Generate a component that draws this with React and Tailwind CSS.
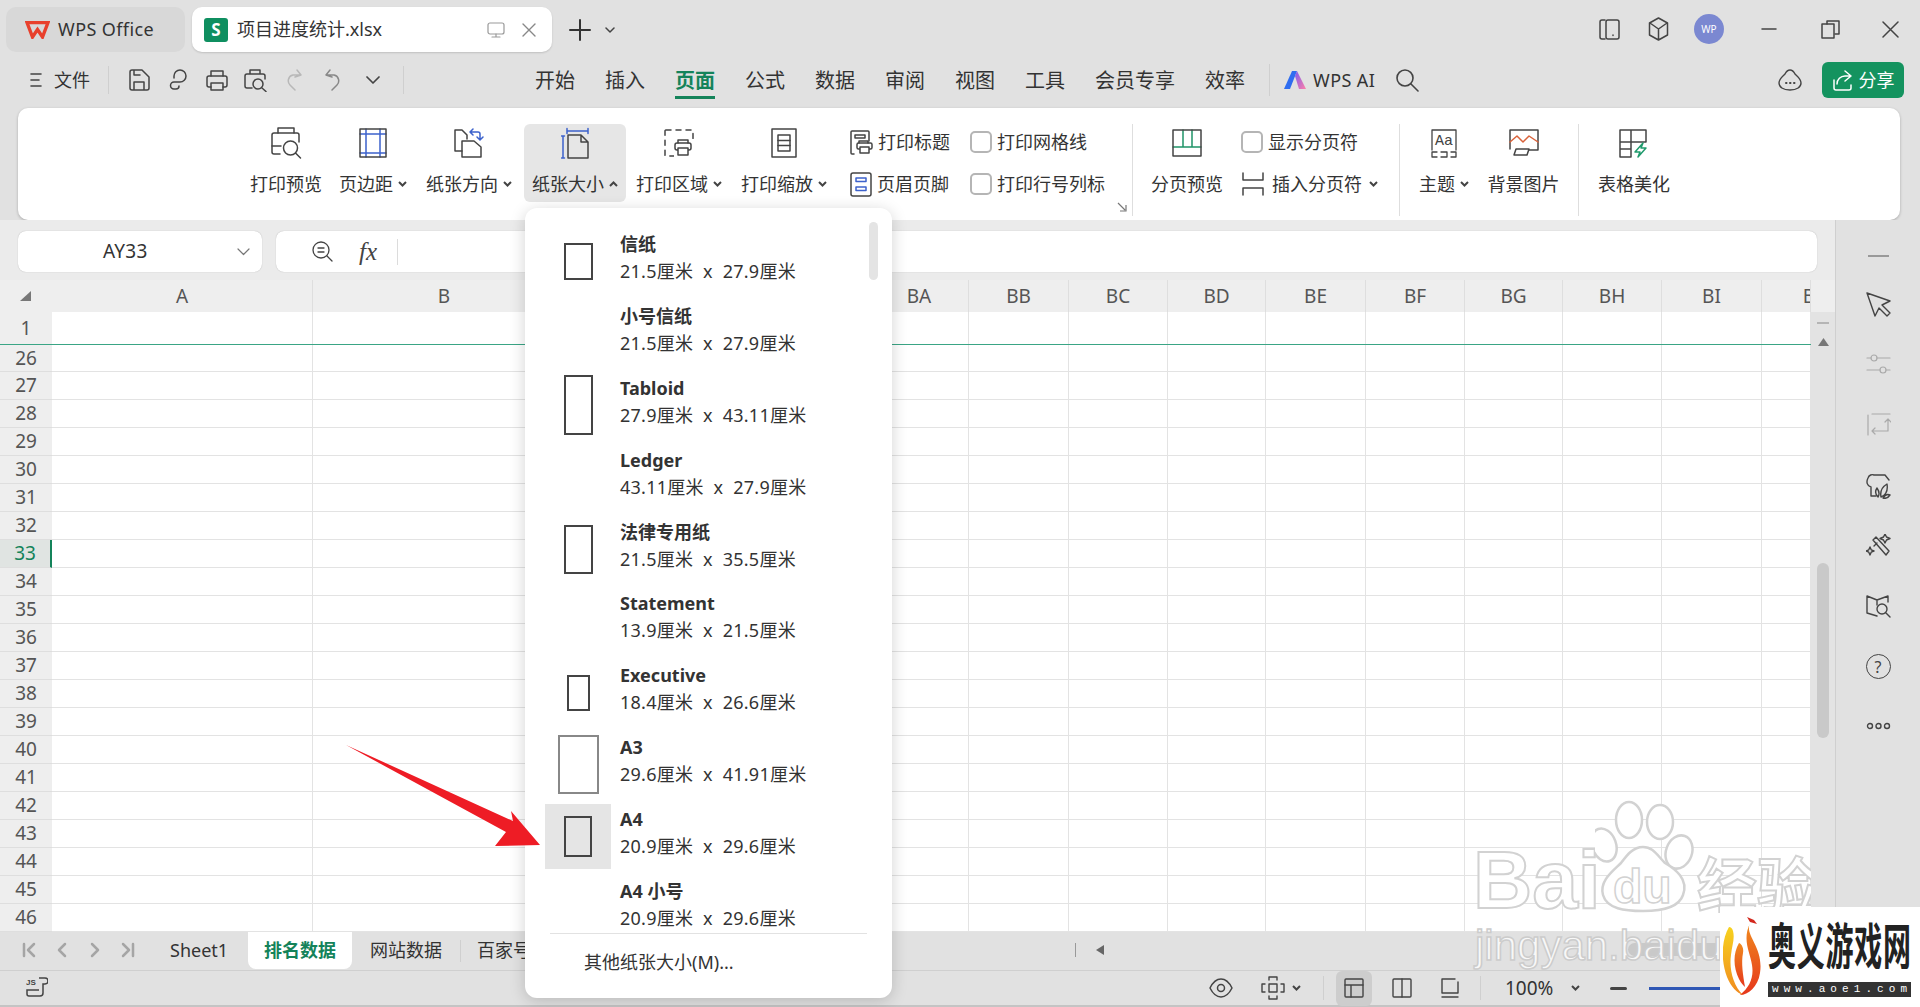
import React from "react";

const cols = [
  { label: "A", w: "w-[261px]" },
  { label: "B", w: "w-[263px]" },
  { label: "", w: "w-[294px]" },
  { label: "BA", w: "w-[99px]" },
  { label: "BB", w: "w-[100px]" },
  { label: "BC", w: "w-[99px]" },
  { label: "BD", w: "w-[98px]" },
  { label: "BE", w: "w-[100px]" },
  { label: "BF", w: "w-[99px]" },
  { label: "BG", w: "w-[98px]" },
  { label: "BH", w: "w-[99px]" },
  { label: "BI", w: "w-[100px]" },
  { label: "BJ", w: "w-[49px]" },
];

const rows = Array.from({ length: 21 }, (_, i) => i + 26);

const papers = [
  { name: "信纸", size: "21.5厘米  x  27.9厘米", icon: "w-[29px] h-[37px] border-[#444]" },
  { name: "小号信纸", size: "21.5厘米  x  27.9厘米" },
  { name: "Tabloid", size: "27.9厘米  x  43.11厘米", icon: "w-[29px] h-[60px] border-[#444]" },
  { name: "Ledger", size: "43.11厘米  x  27.9厘米" },
  { name: "法律专用纸", size: "21.5厘米  x  35.5厘米", icon: "w-[29px] h-[49px] border-[#444]" },
  { name: "Statement", size: "13.9厘米  x  21.5厘米" },
  { name: "Executive", size: "18.4厘米  x  26.6厘米", icon: "w-[23px] h-[36px] border-[#444]" },
  { name: "A3", size: "29.6厘米  x  41.91厘米", icon: "w-[41px] h-[59px] border-[#888]" },
  { name: "A4", size: "20.9厘米  x  29.6厘米", icon: "w-[28px] h-[41px] border-[#444]", active: true },
  { name: "A4 小号", size: "20.9厘米  x  29.6厘米" },
];

const Svg = ({ w = 24, h = 24, sw = 1.5, className = "text-[#444]", children }) => (
  <svg width={w} height={h} viewBox={`0 0 ${w} ${h}`} fill="none" stroke="currentColor" strokeWidth={sw} strokeLinecap="round" strokeLinejoin="round" className={className}>
    {children}
  </svg>
);

const Chevron = ({ up, className = "" }) => (
  <svg width="9" height="6" viewBox="0 0 9 6" fill="none" stroke="#444" strokeWidth="2" className={className}>
    <path d={up ? "M1 5l3.500-3.500L8 5" : "M1 1l3.500 3.500L8 1"} />
  </svg>
);

const BLUE = "#3d62cc";

const PrintPreviewIcon = () => (
  <Svg w={34} h={34}>
    <path d="M9 7V2h16v5" />
    <path d="M11 28H5a2 2 0 0 1-2-2V9a2 2 0 0 1 2-2h23a2 2 0 0 1 2 2v7" />
    <path d="M3 20h9" />
    <circle cx="21.500" cy="22" r="7" />
    <path d="M26.500 27l5 5" />
  </Svg>
);
const MarginIcon = () => (
  <Svg w={28} h={30}>
    <path d="M7 1v28M21 1v28M1 6h26M1 25h26" stroke={BLUE} />
    <rect x="1" y="1" width="26" height="28" />
  </Svg>
);
const OrientIcon = () => (
  <Svg w={32} h={30}>
    <path d="M9 23H2V2h7l5 5v4" />
    <path d="M9 29V13h12l7 6v10z" />
    <path d="M18 4h7a2 2 0 0 1 2 2v5M20 1l-3 3 3 3M24 9l3 3 3-3" stroke={BLUE} />
  </Svg>
);
const PaperIcon = () => (
  <Svg w={28} h={32}>
    <path d="M6 4h21M6 1.500v5M27 1.500v5M2 9v22M0.500 9h3M0.500 31h3" stroke={BLUE} />
    <path d="M7 8h13l7 7v16H7zM20 8v7h7" />
  </Svg>
);
const AreaIcon = () => (
  <Svg w={30} h={30}>
    <rect x="1" y="2" width="28" height="26" rx="1" strokeDasharray="5 5" />
    <rect x="10" y="11" width="20" height="19" fill="#fff" stroke="none" />
    <path d="M14 15v-3h10v3" />
    <rect x="11" y="15" width="16" height="7" rx="2" />
    <rect x="14" y="20" width="10" height="7" fill="#fff" />
  </Svg>
);
const ScaleIcon = () => (
  <Svg w={26} h={30}>
    <rect x="1" y="1" width="24" height="28" />
    <rect x="7" y="7" width="12" height="16" />
    <path d="M7 12.500h12M7 17.500h12" />
  </Svg>
);
const TitleIcon = () => (
  <Svg w={23} h={25}>
    <path d="M4 24H2a1 1 0 0 1-1-1V2a1 1 0 0 1 1-1h16a1 1 0 0 1 1 1v9" />
    <rect x="5" y="5" width="10" height="3" />
    <path d="M9 13v-2h9v2" />
    <rect x="7" y="13" width="15" height="6" rx="1.500" />
    <rect x="10" y="17" width="9" height="6" fill="#fff" />
  </Svg>
);
const HeaderIcon = () => (
  <Svg w={22} h={25}>
    <rect x="1" y="1" width="20" height="23" rx="2" />
    <rect x="6" y="6" width="10" height="3.500" stroke={BLUE} />
    <rect x="6" y="15" width="10" height="3.500" stroke={BLUE} />
  </Svg>
);
const BreakViewIcon = () => (
  <Svg w={30} h={28}>
    <path d="M1 18h28M11 1v17M20 1v17" stroke="#1f9468" />
    <path d="M1 1h28M1 1v26h28V1" />
  </Svg>
);
const InsertBreakIcon = () => (
  <Svg w={24} h={24}>
    <path d="M2 1v7h20V1M2 23v-7h20v7" />
  </Svg>
);
const ThemeIcon = () => (
  <Svg w={28} h={31} sw={1.3}>
    <path d="M2 22V2h24v20" />
    <text x="14" y="17" fontSize="15" textAnchor="middle" fill="#444" stroke="none" fontFamily="'Liberation Mono',monospace">Aa</text>
    <path d="M7 24H2v5h5M11 24h6v5h-6M21 24h5v5h-5" />
  </Svg>
);
const BgIcon = () => (
  <Svg w={30} h={28}>
    <path d="M1 20V1h28v20h-9" />
    <path d="M1 13l7-6 6 6 6-6 9 6" stroke="#d9623a" />
    <path d="M7 20h13l-2 6H5z" />
  </Svg>
);
const BeautyIcon = () => (
  <Svg w={30} h={29}>
    <path d="M1 1h26v12H1zM1 13v15h11V13M1 20h11M12 1v12" />
    <path d="M24 14l-8 9h5l-2 5 8-9h-5z" stroke="#1f9a6c" />
  </Svg>
);

const BigButton = ({ icon, label, w, ml = "", chevron, up, active }) => (
  <div className={`flex h-[78px] flex-col items-center rounded-md ${w} ${ml} ${active ? "bg-[#e6e6e6]" : ""}`}>
    <div className="flex h-[38px] items-center">{icon}</div>
    <div className="mt-[9px] flex h-[26px] items-center gap-[5px] whitespace-nowrap text-[18px] leading-[26px] text-[#333]">
      {label}
      {chevron && <Chevron up={up} />}
    </div>
  </div>
);

const SmallRow = ({ icon, label, chevron }) => (
  <div className="flex h-[26px] items-center whitespace-nowrap text-[18px] text-[#333]">
    {icon}
    <span>{label}</span>
    {chevron && <Chevron className="ml-[7px]" />}
  </div>
);

const CheckBox = () => <span className="mr-[5px] block h-[22px] w-[22px] rounded-[5px] border-2 border-[#b5b5b5] bg-white" />;

const Ribbon = () => (
  <div className="mx-[18px] flex h-[112px] w-[1882px] rounded-[10px] bg-white pl-[226px] pt-[16px] shadow-[0_1px_3px_rgba(0,0,0,0.25)]">
    <BigButton icon={<PrintPreviewIcon />} label="打印预览" w="w-[84px]" />
    <BigButton icon={<MarginIcon />} label="页边距" w="w-[82px]" ml="ml-[4px]" chevron />
    <BigButton icon={<OrientIcon />} label="纸张方向" w="w-[94px]" ml="ml-[8px]" chevron />
    <BigButton icon={<PaperIcon />} label="纸张大小" w="w-[102px]" ml="ml-[8px]" chevron up active />
    <BigButton icon={<AreaIcon />} label="打印区域" w="w-[98px]" ml="ml-[4px]" chevron />
    <BigButton icon={<ScaleIcon />} label="打印缩放" w="w-[100px]" ml="ml-[6px]" chevron />
    <div className="ml-[14px] flex w-[122px] flex-col gap-[16px] pt-[5px]">
      <SmallRow icon={<span className="mr-[5px] ml-[2px] block"><TitleIcon /></span>} label="打印标题" />
      <SmallRow icon={<span className="mr-[5px] ml-[2px] block"><HeaderIcon /></span>} label="页眉页脚" />
    </div>
    <div className="relative h-[90px] w-[162px] pt-[5px]">
      <div className="flex flex-col gap-[16px]">
        <SmallRow icon={<CheckBox />} label="打印网格线" />
        <SmallRow icon={<CheckBox />} label="打印行号列标" />
      </div>
      <svg width="10" height="10" viewBox="0 0 10 10" fill="none" stroke="#777" strokeWidth="1.2" className="absolute bottom-[2px] right-[5px]">
        <path d="M1 1l7 7M3 9h6V3" />
      </svg>
    </div>
    <div className="h-[92px] w-px bg-[#dedede]" />
    <BigButton icon={<BreakViewIcon />} label="分页预览" w="w-[82px]" ml="ml-[13px]" />
    <div className="ml-[13px] flex w-[158px] flex-col gap-[16px] pt-[5px]">
      <SmallRow icon={<CheckBox />} label="显示分页符" />
      <SmallRow icon={<span className="mr-[7px] block"><InsertBreakIcon /></span>} label="插入分页符" chevron />
    </div>
    <div className="h-[92px] w-px bg-[#dedede]" />
    <BigButton icon={<ThemeIcon />} label="主题" w="w-[64px]" ml="ml-[12px]" chevron />
    <BigButton icon={<BgIcon />} label="背景图片" w="w-[81px]" ml="ml-[7px]" />
    <div className="ml-[14px] h-[92px] w-px bg-[#dedede]" />
    <BigButton icon={<BeautyIcon />} label="表格美化" w="w-[80px]" ml="ml-[15px]" />
  </div>
);

const TitleBar = () => (
  <div className="flex h-[52px] items-start pl-[6px] pt-[7px]">
    <div className="flex h-[45px] w-[179px] items-center rounded-[10px] bg-[#d8d8d8] pl-[19px] text-[18px] tracking-[0.4px] text-[#333]">
      <svg width="25" height="18" viewBox="0 0 25 18" fill="none" stroke="#e8402c" strokeWidth="3.400" strokeLinejoin="miter" className="mr-[8px]">
        <path d="M2 1.500h21L17.500 16 12.500 8.500 7.500 16z" />
      </svg>
      WPS Office
    </div>
    <div className="ml-[7px] flex h-[45px] w-[360px] items-center rounded-[10px] bg-white pl-[12px] text-[18px] text-[#333] shadow-[0_1px_2px_rgba(0,0,0,0.15)]">
      <div className="flex h-[24px] w-[24px] items-center justify-center rounded-[3px] bg-[#0f8f60] text-[17px] font-bold text-white">S</div>
      <span className="ml-[9px]">项目进度统计.xlsx</span>
      <Svg w={18} h={18} sw={1.2} className="ml-[105px] text-[#999]">
        <rect x="1" y="2" width="16" height="11" rx="2" />
        <path d="M9 13v3M5 16h8" />
      </Svg>
      <Svg w={16} h={16} sw={1.4} className="ml-[16px] text-[#888]">
        <path d="M2 2l12 12M14 2L2 14" />
      </Svg>
    </div>
    <Svg w={22} h={22} sw={2} className="ml-[17px] mt-[12px] text-[#333]">
      <path d="M11 1v20M1 11h20" />
    </Svg>
    <Svg w={10} h={7} sw={1.5} className="ml-[14px] mt-[20px] text-[#444]">
      <path d="M1 1l4 4 4-4" />
    </Svg>
    <div className="ml-auto flex items-center pr-[10px] pt-[6px]">
      <div className="flex h-[32px] w-[40px] items-center justify-center">
        <Svg w={22} h={21}>
          <path d="M6 1H3a2 2 0 0 0-2 2v15a2 2 0 0 0 2 2h3" />
          <rect x="7" y="1" width="13" height="19" rx="2" />
          <path d="M14 16v.5" />
        </Svg>
      </div>
      <div className="ml-[8px] flex h-[32px] w-[40px] items-center justify-center">
        <Svg w={23} h={24}>
          <path d="M11.500 1l9 5v12l-9 5-9-5V6zM3 6l8.500 6 8.500-6M11.500 12v11" />
        </Svg>
      </div>
      <div className="ml-[11px] flex h-[32px] w-[40px] items-center justify-center">
        <div className="flex h-[30px] w-[30px] items-center justify-center rounded-full bg-[#7b88d1] text-[10px] text-white">WP</div>
      </div>
      <div className="ml-[20px] flex h-[32px] w-[40px] items-center justify-center">
        <Svg w={16} h={4}><path d="M1 2h14" /></Svg>
      </div>
      <div className="ml-[21px] flex h-[32px] w-[40px] items-center justify-center">
        <Svg w={19} h={19}>
          <path d="M6 4V1h12v13h-4" />
          <rect x="1" y="4" width="12" height="14" />
        </Svg>
      </div>
      <div className="ml-[20px] flex h-[32px] w-[40px] items-center justify-center">
        <Svg w={17} h={17}><path d="M1 1l15 15M16 1L1 16" /></Svg>
      </div>
    </div>
  </div>
);

const QuickIcon = ({ children }) => <div className="flex w-[39px] items-center justify-center">{children}</div>;

const MenuBar = () => (
  <div className="flex h-[56px] items-center pl-[30px] text-[18px] text-[#333]">
    <Svg w={12} h={16} sw={1.6}><path d="M1 2h10M1 8h8M1 14h10" /></Svg>
    <span className="ml-[12px] w-[36px] whitespace-nowrap">文件</span>
    <div className="ml-[18px] h-[28px] w-px bg-[#cfcfcf]" />
    <div className="ml-[10px] flex">
      <QuickIcon>
        <Svg w={22} h={22}>
          <path d="M4 1h10l7 7v11a2 2 0 0 1-2 2H4a2 2 0 0 1-2-2V3a2 2 0 0 1 2-2zM6 1v5h6M6 21v-8h10v8" />
        </Svg>
      </QuickIcon>
      <QuickIcon>
        <Svg w={20} h={22}><path d="M6 9V7a6 6 0 1 1 6 6H6a3.500 3.500 0 0 0 0 7h2a3 3 0 0 0 3-3" /></Svg>
      </QuickIcon>
      <QuickIcon>
        <Svg w={22} h={21}>
          <path d="M5 6V1h12v5" />
          <path d="M5 17H3a2 2 0 0 1-2-2V8a2 2 0 0 1 2-2h16a2 2 0 0 1 2 2v7a2 2 0 0 1-2 2h-2" />
          <rect x="5" y="13" width="12" height="7" />
        </Svg>
      </QuickIcon>
      <QuickIcon>
        <Svg w={23} h={23}>
          <path d="M6 5V1h10v4M8 19H3a2 2 0 0 1-2-2V7a2 2 0 0 1 2-2h16a2 2 0 0 1 2 2v3" />
          <circle cx="14" cy="15" r="5" />
          <path d="M18 19l4 3.500" />
        </Svg>
      </QuickIcon>
      <QuickIcon>
        <Svg w={18} h={22} className="text-[#b8b8b8]"><path d="M11 1l4 5-6 2M15 6H7C2 7 1 13 4 16l5 5" /></Svg>
      </QuickIcon>
      <QuickIcon>
        <Svg w={18} h={22} className="mr-[4px] text-[#888]"><path d="M7 1L3 6l6 2M3 6h8c5 1 6 7 3 10l-5 5" /></Svg>
      </QuickIcon>
      <QuickIcon>
        <Svg w={14} h={9} sw={1.7}><path d="M1 1l6 6 6-6" /></Svg>
      </QuickIcon>
    </div>
    <div className="ml-[11px] h-[28px] w-px bg-[#cfcfcf]" />
    <div className="ml-[131px] mt-[1px] flex gap-[30px] text-[20px] text-[#333]">
      <span>开始</span>
      <span>插入</span>
      <span className="relative font-bold text-[#14835a]">
        页面
        <span className="absolute -bottom-[3px] left-0 h-[3px] w-full bg-[#14835a]" />
      </span>
      <span>公式</span>
      <span>数据</span>
      <span>审阅</span>
      <span>视图</span>
      <span>工具</span>
      <span className="whitespace-nowrap">会员专享</span>
      <span>效率</span>
    </div>
    <div className="ml-[24px] h-[32px] w-px bg-[#cfcfcf]" />
    <svg width="24" height="18" viewBox="0 0 24 18" className="ml-[14px]">
      <defs>
        <linearGradient id="aiPink" x1="0" y1="0" x2="1" y2="1">
          <stop offset="0" stopColor="#7b5cf0" />
          <stop offset="1" stopColor="#ff7fa8" />
        </linearGradient>
      </defs>
      <path d="M8 0h5L6 18H0z" fill="#2f6df0" />
      <path d="M11 5l2-5 9 18h-7z" fill="url(#aiPink)" />
    </svg>
    <span className="ml-[5px] w-[61px] whitespace-nowrap tracking-[0.4px]">WPS AI</span>
    <Svg w={24} h={24} sw={1.6} className="ml-[21px] text-[#444]">
      <circle cx="10" cy="10" r="8" />
      <path d="M16 16l7 7" />
    </Svg>
    <div className="ml-auto">
      <Svg w={24} h={24} sw={1.4}>
        <path d="M12 2c3 0 4 2 5 4 2 2 6 5 6 9 0 4-4 7-11 7S1 19 1 15c0-4 4-7 6-9 1-2 2-4 5-4z" />
        <path d="M8 15h.5M12 15h.5M16 15h.5" strokeWidth="2" />
      </Svg>
    </div>
    <div className="ml-[20px] mr-[16px] flex h-[36px] w-[82px] items-center justify-center gap-[5px] rounded-md bg-[#14935f] text-[18px] text-white">
      <Svg w={22} h={22} sw={1.5} className="text-white">
        <path d="M13 2l6 5-6 5M19 7h-6a8 8 0 0 0-8 8M2 11v8a2 2 0 0 0 2 2h13a2 2 0 0 0 2-2v-3" />
      </Svg>
      分享
    </div>
  </div>
);

const FormulaRow = () => (
  <div className="flex h-[60px] items-center bg-[#ebebeb] pl-[18px] pt-[3px]">
    <div className="flex h-[41px] w-[244px] items-center rounded-lg bg-white pl-[85px] text-[19px] tracking-[0.3px] text-[#333] shadow-[0_0_1px_rgba(0,0,0,0.3)]">
      <span className="w-[52px]">AY33</span>
      <Svg w={13} h={8} sw={1.2} className="ml-[82px] text-[#777]"><path d="M1 1l5.500 5.500L12 1" /></Svg>
    </div>
    <div className="ml-[14px] flex h-[41px] w-[1541px] items-center rounded-lg bg-white pl-[36px] shadow-[0_0_1px_rgba(0,0,0,0.3)]">
      <Svg w={22} h={22} sw={1.3}>
        <circle cx="9" cy="9" r="8" />
        <path d="M15 15l5 5M6 7h6M6 11h6" />
      </Svg>
      <span className="ml-[25px] font-['Liberation_Serif',serif] text-[25px] italic text-[#444]">fx</span>
      <div className="ml-[20px] h-[26px] w-px bg-[#dcdcdc]" />
    </div>
  </div>
);

const Grid = () => (
  <div className="flex">
    <div className="w-[1811px] overflow-hidden bg-white">
      <div className="flex h-[32px] bg-[#eeeeee] text-[19px] text-[#555]">
        <div className="flex w-[52px] items-center justify-center">
          <svg width="12" height="10" viewBox="0 0 12 10"><path d="M11 0v10H0z" fill="#777" /></svg>
        </div>
        {cols.map((c) => (
          <div key={c.label} className={`flex shrink-0 justify-start overflow-hidden border-r border-[#dedede] ${c.w}`}>
            <span className={`block shrink-0 text-center leading-[32px] ${c.label === "BJ" ? "w-[99px]" : "w-full"}`}>{c.label}</span>
          </div>
        ))}
      </div>
      <div className="flex h-[33px] border-b border-[#3aa585]">
        <div className="flex w-[52px] items-center justify-center bg-[#eeeeee] text-[19px] text-[#555]">1</div>
        {cols.map((c) => (
          <div key={c.label} className={`shrink-0 border-r border-[#e3e3e3] ${c.w}`} />
        ))}
      </div>
      {rows.map((n) => (
        <div key={n} className={`flex ${n === 26 ? "h-[27px]" : "h-[28px]"}`}>
          <div className={`flex w-[52px] items-center justify-center border-b border-[#dedede] text-[19px] ${n === 33 ? "border-r-2 border-r-[#14835a] bg-[#e0e4e2] text-[#14835a]" : "bg-[#eeeeee] text-[#555]"}`}>
            {n}
          </div>
          {cols.map((c) => (
            <div key={c.label} className={`shrink-0 border-r border-b border-[#e3e3e3] ${c.w}`} />
          ))}
        </div>
      ))}
    </div>
    <div className="w-[24px] bg-[#e3e3e3]">
      <div className="h-[32px] bg-[#eeeeee]" />
      <div className="flex flex-col items-center pt-[10px]">
        <div className="h-[2px] w-[12px] bg-[#b5b5b5]" />
        <svg width="11" height="8" viewBox="0 0 11 8" className="mt-[14px]"><path d="M5.500 0L11 8H0z" fill="#777" /></svg>
        <div className="mt-[217px] h-[175px] w-[12px] rounded-full bg-[#c9c9c9]" />
      </div>
    </div>
  </div>
);

const SheetTabs = () => (
  <div className="flex h-[38px] items-start bg-[#e1e1e1] pl-[22px] text-[18px] text-[#333]">
    <div className="flex h-[36px] items-center">
      <Svg w={14} h={16} sw={2.5} className="text-[#a5a5a5]"><path d="M2 2v12M12 2L6 8l6 6" /></Svg>
      <Svg w={10} h={16} sw={2.5} className="ml-[21px] text-[#a5a5a5]"><path d="M8 2L2 8l6 6" /></Svg>
      <Svg w={10} h={16} sw={2.5} className="ml-[23px] text-[#a5a5a5]"><path d="M2 2l6 6-6 6" /></Svg>
      <Svg w={14} h={16} sw={2.5} className="ml-[21px] text-[#a5a5a5]"><path d="M2 2l6 6-6 6M12 2v12" /></Svg>
    </div>
    <span className="ml-[35px] leading-[36px]">Sheet1</span>
    <div className="ml-[20px] flex h-[37px] w-[104px] items-center justify-center rounded-b-lg bg-white font-bold text-[#14835a]">排名数据</div>
    <span className="ml-[18px] leading-[36px]">网站数据</span>
    <div className="ml-[18px] mt-[8px] h-[22px] w-px bg-[#cfcfcf]" />
    <span className="ml-[16px] w-[200px] whitespace-nowrap leading-[36px]">百家号数据</span>
    <div className="ml-[398px] mt-[11px] h-[14px] w-px bg-[#999]" />
    <svg width="8" height="10" viewBox="0 0 8 10" className="ml-[20px] mt-[13px]"><path d="M8 0v10L0 5z" fill="#666" /></svg>
    <div className="ml-[524px] mt-[11px] h-[13px] w-[180px] rounded-full bg-[#c9c9c9]" />
  </div>
);

const SideIcon = ({ children, mt }) => <div className={`flex justify-center ${mt}`}>{children}</div>;

const SidePanel = () => (
  <div className="w-[85px] border-l border-[#cfcfcf] bg-[#e1e1e1]">
    <SideIcon mt="mt-[35px]"><div className="h-[2px] w-[21px] bg-[#999]" /></SideIcon>
    <SideIcon mt="mt-[35px]">
      <Svg w={25} h={25} sw={1.4}><path d="M1 1l23 8-8 4 8 8-3 3-8-8-4 8z" /></Svg>
    </SideIcon>
    <SideIcon mt="mt-[35px]">
      <Svg w={25} h={24} sw={1.2} className="text-[#aaa]">
        <path d="M1 6h4M11 6h13M1 18h13M20 18h4" />
        <circle cx="8" cy="6" r="3" />
        <circle cx="17" cy="18" r="3" />
      </Svg>
    </SideIcon>
    <SideIcon mt="mt-[37px]">
      <Svg w={25} h={24} sw={1.2} className="text-[#aaa]">
        <path d="M6 1h18M2 2v20M22 7v11H7M9 15l-3 3 3 3M19 9l3-3 3 3" />
      </Svg>
    </SideIcon>
    <SideIcon mt="mt-[36px]">
      <Svg w={25} h={26} sw={1.4}>
        <path d="M5 23V14C1 13 0 9 2 5c1-3 4-4 6-3h11l4 5M5 23h5" />
        <path d="M12 24c-3-3-3-6-1-9 2 3 3 6 1 9zM15 24c-1-5 1-10 6-13 1 6-1 11-6 13zM17 25c2-3 5-4 7-3-2 3-4 4-7 3z" />
      </Svg>
    </SideIcon>
    <SideIcon mt="mt-[35px]">
      <Svg w={25} h={25} sw={1.4}>
        <path d="M7 6l3-3 13 14-3 4zM11 9l-3 3" />
        <path d="M19 0l1.500 3L24 4.500 20.500 6 19 9l-1.500-3L14 4.500 17.500 3zM4 13l1.200 2.800L8 17l-2.800 1.200L4 21l-1.200-2.800L0 17l2.800-1.200z" />
      </Svg>
    </SideIcon>
    <SideIcon mt="mt-[35px]">
      <Svg w={25} h={25} sw={1.4}>
        <path d="M11 6L1 2v17l10 3M11 6l11-4v6M11 6v5" />
        <circle cx="16" cy="15" r="5" />
        <path d="M20 19l4 4" />
      </Svg>
    </SideIcon>
    <SideIcon mt="mt-[35px]">
      <div className="flex h-[25px] w-[25px] items-center justify-center rounded-full border-[1.5px] border-[#444] text-[16px] text-[#444]">?</div>
    </SideIcon>
    <SideIcon mt="mt-[43px]">
      <Svg w={25} h={8} sw={1.4}>
        <circle cx="4" cy="4" r="2.500" />
        <circle cx="12.500" cy="4" r="2.500" />
        <circle cx="21" cy="4" r="2.500" />
      </Svg>
    </SideIcon>
  </div>
);

const StatusBar = () => (
  <div className="flex h-[37px] items-center border-t border-b-2 border-t-[#cfcfcf] border-b-[#c4c4c4] bg-[#e1e1e1] pl-[26px]">
    <svg width="22" height="20" viewBox="0 0 22 20" fill="none" stroke="#444" strokeWidth="1.5" className="-mt-[2px]">
      <text x="0" y="8" fontSize="8" fontWeight="700" fill="#444" stroke="none" fontFamily="'Liberation Sans',sans-serif">JS</text>
      <path d="M13 1h6a2.500 2.500 0 0 1 0 6h-2v9a3 3 0 0 1-3 3H3a2 2 0 0 1-2-2v-4h12" />
    </svg>
    <Svg w={24} h={20} sw={1.5} className="ml-[1161px] text-[#444]">
      <path d="M1 10c6-12 16-12 22 0-6 12-16 12-22 0z" />
      <circle cx="12" cy="10" r="3.500" />
    </Svg>
    <Svg w={24} h={24} sw={1.4} className="ml-[28px] text-[#444]">
      <rect x="8" y="8" width="8" height="8" />
      <path d="M8 4V1h8v3M8 20v3h8v-3M4 8H1v8h3M20 8h3v8h-3" />
    </Svg>
    <Chevron className="ml-[7px]" />
    <div className="ml-[22px] h-[24px] w-px bg-[#cfcfcf]" />
    <div className="ml-[12px] flex h-[35px] w-[36px] items-center justify-center rounded-md bg-[#cdcdcd]">
      <Svg w={20} h={20} sw={1.4}>
        <rect x="1" y="1" width="18" height="18" rx="1" />
        <path d="M1 7h18M7 7v12" />
      </Svg>
    </div>
    <Svg w={20} h={20} sw={1.4} className="ml-[20px] text-[#444]">
      <rect x="1" y="1" width="18" height="18" rx="1" />
      <path d="M10 1v18" />
    </Svg>
    <Svg w={20} h={20} sw={1.4} className="ml-[28px] text-[#444]">
      <path d="M15 1H2v14h16V4M2 19h16" />
    </Svg>
    <div className="ml-[20px] h-[24px] w-px bg-[#cfcfcf]" />
    <span className="ml-[24px] text-[19px] text-[#333]">100%</span>
    <Chevron className="ml-[18px]" />
    <div className="ml-[30px] h-[3px] w-[17px] rounded-full bg-[#444]" />
    <div className="ml-[22px] h-[3px] w-[80px] bg-[#2f57b5]" />
  </div>
);

const PaperMenu = () => (
  <div className="absolute left-[525px] top-[208px] z-10 h-[790px] w-[367px] rounded-[12px] bg-white shadow-[0_3px_16px_rgba(0,0,0,0.18)]">
    <div className="absolute right-[14px] top-[14px] h-[58px] w-[9px] rounded-full bg-[#e4e4e4]" />
    <div className="h-[725px] overflow-hidden pl-[20px] pt-[15px]">
      {papers.map((p) => (
        <div key={p.name} className="flex h-[71.9px]">
          <div className={`mt-[6px] flex h-[65px] w-[66px] shrink-0 items-center justify-center ${p.active ? "bg-[#e5e5e5]" : ""}`}>
            {p.icon && <div className={`border-2 ${p.icon}`} />}
          </div>
          <div className="ml-[9px] whitespace-pre pt-[8px] text-[18px] leading-[27px] tracking-[0.25px] text-[#333]">
            <div className="font-bold tracking-normal">{p.name}</div>
            <div>{p.size}</div>
          </div>
        </div>
      ))}
    </div>
    <div className="mx-[25px] h-px bg-[#e2e2e2]" />
    <div className="pl-[59px] pt-[15px] text-[18px] leading-[27px] text-[#333]">其他纸张大小(M)...</div>
  </div>
);

const Watermark = () => (
  <div className="pointer-events-none absolute left-[1470px] top-[795px] z-20 h-[175px] w-[341px] overflow-hidden font-['Liberation_Sans',sans-serif] text-white">
    <div className="absolute left-[3px] top-[40px] text-[82px] font-bold leading-[90px] [-webkit-text-stroke:2px_#d2d2d2]">Bai</div>
    <svg width="100" height="120" viewBox="0 0 100 120" fill="#fff" stroke="#d2d2d2" strokeWidth="2.500" className="absolute left-[125px] top-[2px]">
      <ellipse cx="34" cy="23" rx="13" ry="18" />
      <ellipse cx="65" cy="25" rx="13" ry="17" />
      <ellipse cx="9" cy="48" rx="12" ry="17" transform="rotate(-20 9 48)" />
      <ellipse cx="84" cy="55" rx="13" ry="17" transform="rotate(20 84 55)" />
      <path d="M48 50c10 0 14 8 22 16 10 6 24 16 18 32-4 12-20 16-40 16-18 0-36-2-40-16-4-14 10-24 18-32 6-8 12-16 22-16z" />
    </svg>
    <div className="absolute left-[143px] top-[62px] text-[48px] font-bold leading-[60px] text-white [-webkit-text-stroke:1.5px_#d2d2d2]">du</div>
    <div className="absolute left-[227px] top-[52px] whitespace-nowrap font-['Noto_Sans_CJK_SC',sans-serif] text-[60px] font-bold leading-[70px] [-webkit-text-stroke:2px_#d2d2d2]">经验</div>
    <div className="absolute left-[5px] top-[126px] whitespace-nowrap text-[42px] leading-[50px] text-[#f8f8f8] [-webkit-text-stroke:1.5px_#cccccc]">jingyan.baidu</div>
  </div>
);

const SiteBadge = () => (
  <div className="absolute bottom-0 right-0 z-30 flex h-[100px] w-[200px] bg-white pl-[3px] pt-[10px]">
    <svg width="40" height="80" viewBox="0 0 40 80" className="shrink-0">
      <defs>
        <linearGradient id="flameA" x1="0" y1="0" x2="0" y2="1">
          <stop offset="0" stopColor="#f7d21f" />
          <stop offset="1" stopColor="#f08a1e" />
        </linearGradient>
        <linearGradient id="flameB" x1="0" y1="0" x2="0" y2="1">
          <stop offset="0" stopColor="#f08a1e" />
          <stop offset="1" stopColor="#e6371c" />
        </linearGradient>
      </defs>
      <path d="M24 0l7 3 3 4-7-2z" fill="#d3281d" />
      <path d="M27 6c-6 12 14 24 10 50-2 14-12 22-20 22 10-8 14-18 12-30-2-14-10-24-2-42z" fill="url(#flameB)" />
      <path d="M6 10C-2 24-2 44 4 60c4 10 10 16 16 18C10 68 6 52 8 38c1-10 4-16 2-24-1-3-2-4-4-4z" fill="url(#flameA)" />
      <path d="M16 26c-6 10-6 24 0 36 2 4 4 6 6 8-2-12-4-24-2-34 1-4-1-9-4-10z" fill="url(#flameB)" />
    </svg>
    <div className="ml-[5px] flex flex-col">
      <div className="flex h-[52px] w-[143px] items-center justify-between overflow-hidden font-['Noto_Sans_CJK_SC',sans-serif] text-[28px] font-bold text-[#222]">
        {["奥", "义", "游", "戏", "网"].map((c) => (
          <span key={c} className="block scale-y-[1.8]">{c}</span>
        ))}
      </div>
      <div className="mt-[13px] flex h-[15px] w-[143px] items-center justify-between bg-[#333] px-[4px] font-['Liberation_Mono',monospace] text-[11px] text-white">
        {"www.aoe1.com".split("").map((c, i) => (
          <span key={i}>{c}</span>
        ))}
      </div>
    </div>
  </div>
);

const RedArrow = () => (
  <svg width="200" height="105" viewBox="0 0 200 105" className="absolute left-[345px] top-[744px] z-40">
    <path d="M1 1l167 76-2-10 29 34-45 1 11-14z" fill="#ee1c25" />
  </svg>
);

export default function App() {
  return (
    <div className="relative h-[1007px] w-[1920px] overflow-hidden bg-[#e1e1e1] [font-family:'Noto_Sans','Noto_Sans_CJK_SC',sans-serif]">
      <TitleBar />
      <MenuBar />
      <Ribbon />
      <div className="flex h-[750px]">
        <div className="w-[1835px]">
          <FormulaRow />
          <Grid />
          <SheetTabs />
        </div>
        <SidePanel />
      </div>
      <StatusBar />
      <PaperMenu />
      <Watermark />
      <SiteBadge />
      <RedArrow />
    </div>
  );
}
